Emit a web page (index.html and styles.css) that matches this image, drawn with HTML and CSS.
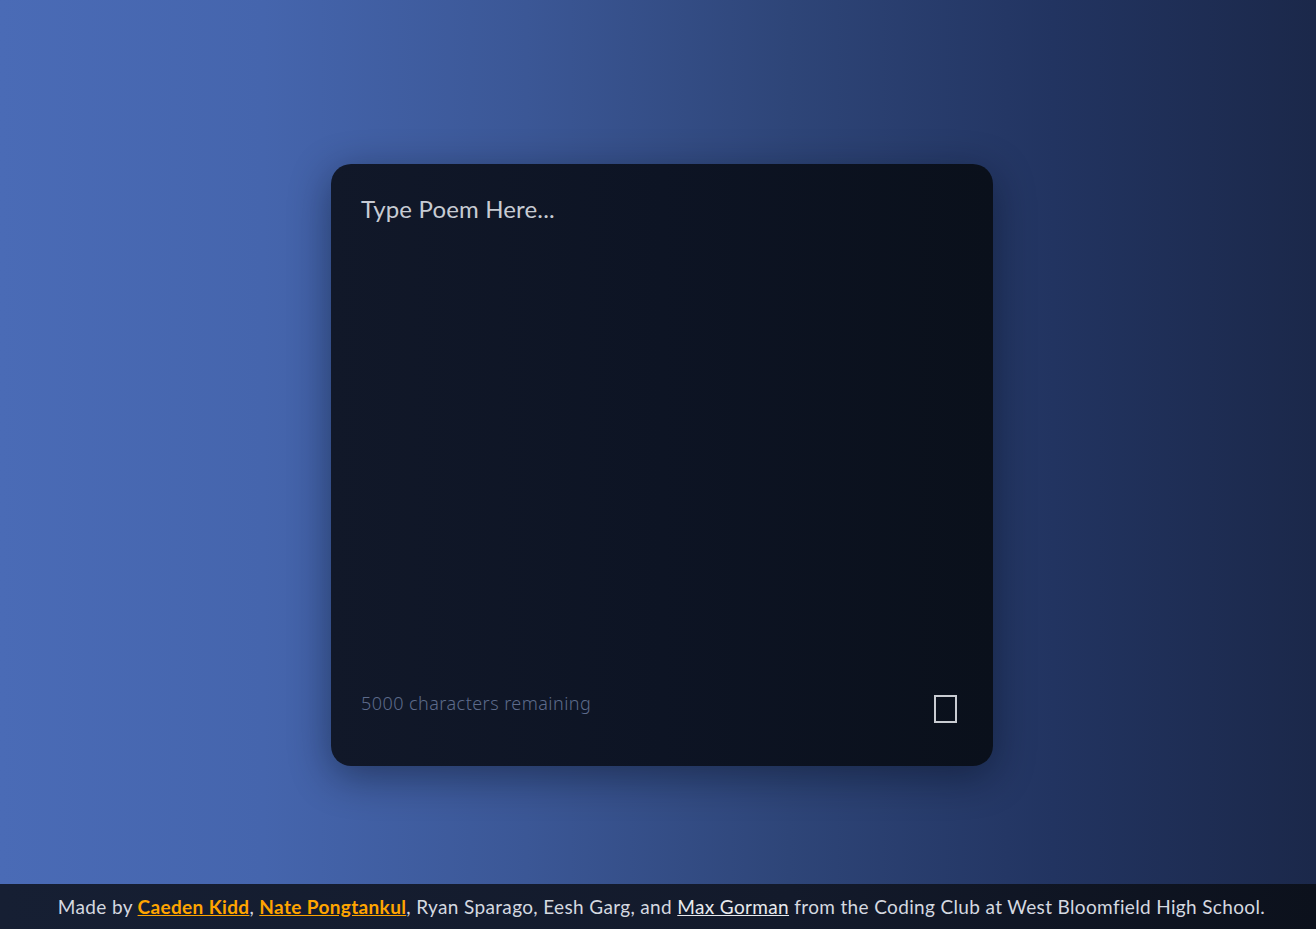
FILE: index.html
```html
<!DOCTYPE html>
<html>
<head>
<meta charset="utf-8">
<link rel="stylesheet" href="styles.css">
</head>
<body>
<main class="stage">
  <section class="card">
    <div class="placeholder">Type Poem Here...</div>
    <div class="card-foot">
      <span class="remaining">5000 characters remaining</span>
      <span class="tofu"></span>
    </div>
  </section>
</main>
<footer class="footer">Made by <a class="gold" href="#">Caeden Kidd</a>, <a class="gold" href="#">Nate Pongtankul</a>, Ryan Sparago, Eesh Garg, and <a class="white" href="#">Max Gorman</a> from the Coding Club at West Bloomfield High School.</footer>
</body>
</html>
```
FILE: styles.css
```css
html, body {
  margin: 0;
  height: 100%;
}
body {
  display: flex;
  flex-direction: column;
  font-family: "Lato", "Open Sans", sans-serif;
  background: linear-gradient(90deg, #4a6bb6 0%, #4565ad 20%, #3b5796 40%, #2e4578 60%, #223461 80%, #1b284a 100%);
}
.stage {
  flex: 1;
  display: flex;
  align-items: center;
  justify-content: center;
  padding-top: 46px;
}
.card {
  width: 662px;
  height: 602px;
  box-sizing: border-box;
  border-radius: 20px;
  background: linear-gradient(90deg, #111829 0%, #0d1424 50%, #0a101b 100%);
  box-shadow: 0 10px 40px rgba(5, 10, 25, 0.45);
  padding: 30px 36px 43px 30px;
  display: flex;
  flex-direction: column;
  justify-content: space-between;
  margin-left: 8px;
}
.placeholder {
  color: #c7cbd3;
  font-size: 24px;
  line-height: 30px;
  letter-spacing: 0.15px;
}
.card-foot {
  display: flex;
  justify-content: space-between;
  align-items: flex-start;
}
.remaining {
  color: #5d6b8b;
  font-size: 18px;
  line-height: 24px;
  font-family: "Noto Sans", "Lato", sans-serif;
  font-weight: 300;
  letter-spacing: 0.45px;
}
.tofu {
  width: 19px;
  height: 24px;
  margin-top: 4px;
  border: 2px solid #c9ccd2;
  display: block;
}
.footer {
  height: 45px;
  line-height: 45px;
  text-align: center;
  padding-left: 7px;
  background: linear-gradient(90deg, #161f33 0%, #131a2b 60%, #0c111c 100%);
  color: #d5d9e0;
  font-size: 19px;
  letter-spacing: 0.35px;
  white-space: nowrap;
}
.footer a.gold {
  color: #ffa500;
  font-weight: 700;
}
.footer a.white {
  color: #e8eaee;
}
```
